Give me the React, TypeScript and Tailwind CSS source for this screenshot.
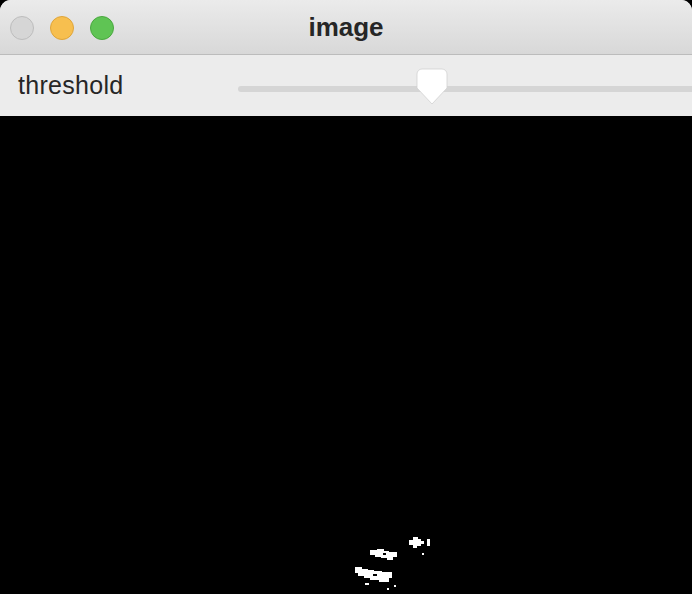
import React from 'react';

const lights = [
  { bg: 'bg-[#d6d6d6]', border: 'border-[#bdbdbd]' },
  { bg: 'bg-[#f7bf4f]', border: 'border-[#dfa53a]' },
  { bg: 'bg-[#5fc454]', border: 'border-[#4aa83f]' },
];

const Blobs: React.FC = () => (
  <svg width="692" height="478" viewBox="0 116 692 478" className="block">
    <g fill="#ffffff">
      {/* upper right speck */}
      <path d="M409 540h4v-3h5v2h3v2h3v3h-3v2h-4v2h-4v-3h-4z" />
      <rect x="427" y="539" width="3" height="7" />
      <rect x="422" y="553" width="2" height="2" />
      {/* middle blob */}
      <path d="M370 550h7v-1h7v2h5v1h8v5h-4v3h-6v-2h-6v-1h-6v-2h-5z" />
      {/* lower blob */}
      <path d="M355 567h7v2h6v1h6v1h8v1h10v6h-3v4h-10v-2h-9v-2h-6v-2h-6v-3h-3z" />
      <rect x="365" y="583" width="4" height="2" />
      <rect x="387" y="588" width="2" height="2" />
      <rect x="394" y="585" width="2" height="2" />
    </g>
    <g fill="#000000">
      <rect x="383" y="553" width="3" height="2" />
      <rect x="373" y="574" width="4" height="2" />
    </g>
  </svg>
);

const App: React.FC = () => {
  return (
    <div className="h-[594px] w-[692px] overflow-hidden bg-black font-['Liberation_Sans',Arial,sans-serif]">
      <div className="overflow-hidden rounded-t-[11px] bg-[#ececec]">
        {/* title bar */}
        <div className="relative flex h-[55px] items-center justify-center border-b border-[#bcbcbc] bg-gradient-to-b from-[#ebebeb] to-[#d8d8d8]">
          <div className="absolute left-[10px] top-[16px] flex gap-[16px]">
            {lights.map((l, i) => (
              <span key={i} className={`block h-[24px] w-[24px] rounded-full border ${l.bg} ${l.border}`} />
            ))}
          </div>
          <span className="text-[26px] font-bold text-[#262626]">image</span>
        </div>

        {/* trackbar */}
        <div className="flex h-[61px] items-center">
          <span className="w-[238px] pl-[18px] text-[25px] tracking-[0.3px] text-[#262626]">threshold</span>
          <div className="relative h-full flex-1">
            <div className="absolute left-0 right-0 top-[31px] h-[6px] rounded-l-full bg-[#d5d5d5]" />
            <svg className="absolute left-[178px] top-[13px]" width="32" height="38" viewBox="0 0 32 38">
              <path
                d="M6 1h20a5 5 0 0 1 5 5v14L16 36 1 20V6a5 5 0 0 1 5-5z"
                fill="#ffffff"
                stroke="#d2d2d2"
                strokeWidth="0.8"
              />
            </svg>
          </div>
        </div>
      </div>

      <Blobs />
    </div>
  );
};

export default App;
